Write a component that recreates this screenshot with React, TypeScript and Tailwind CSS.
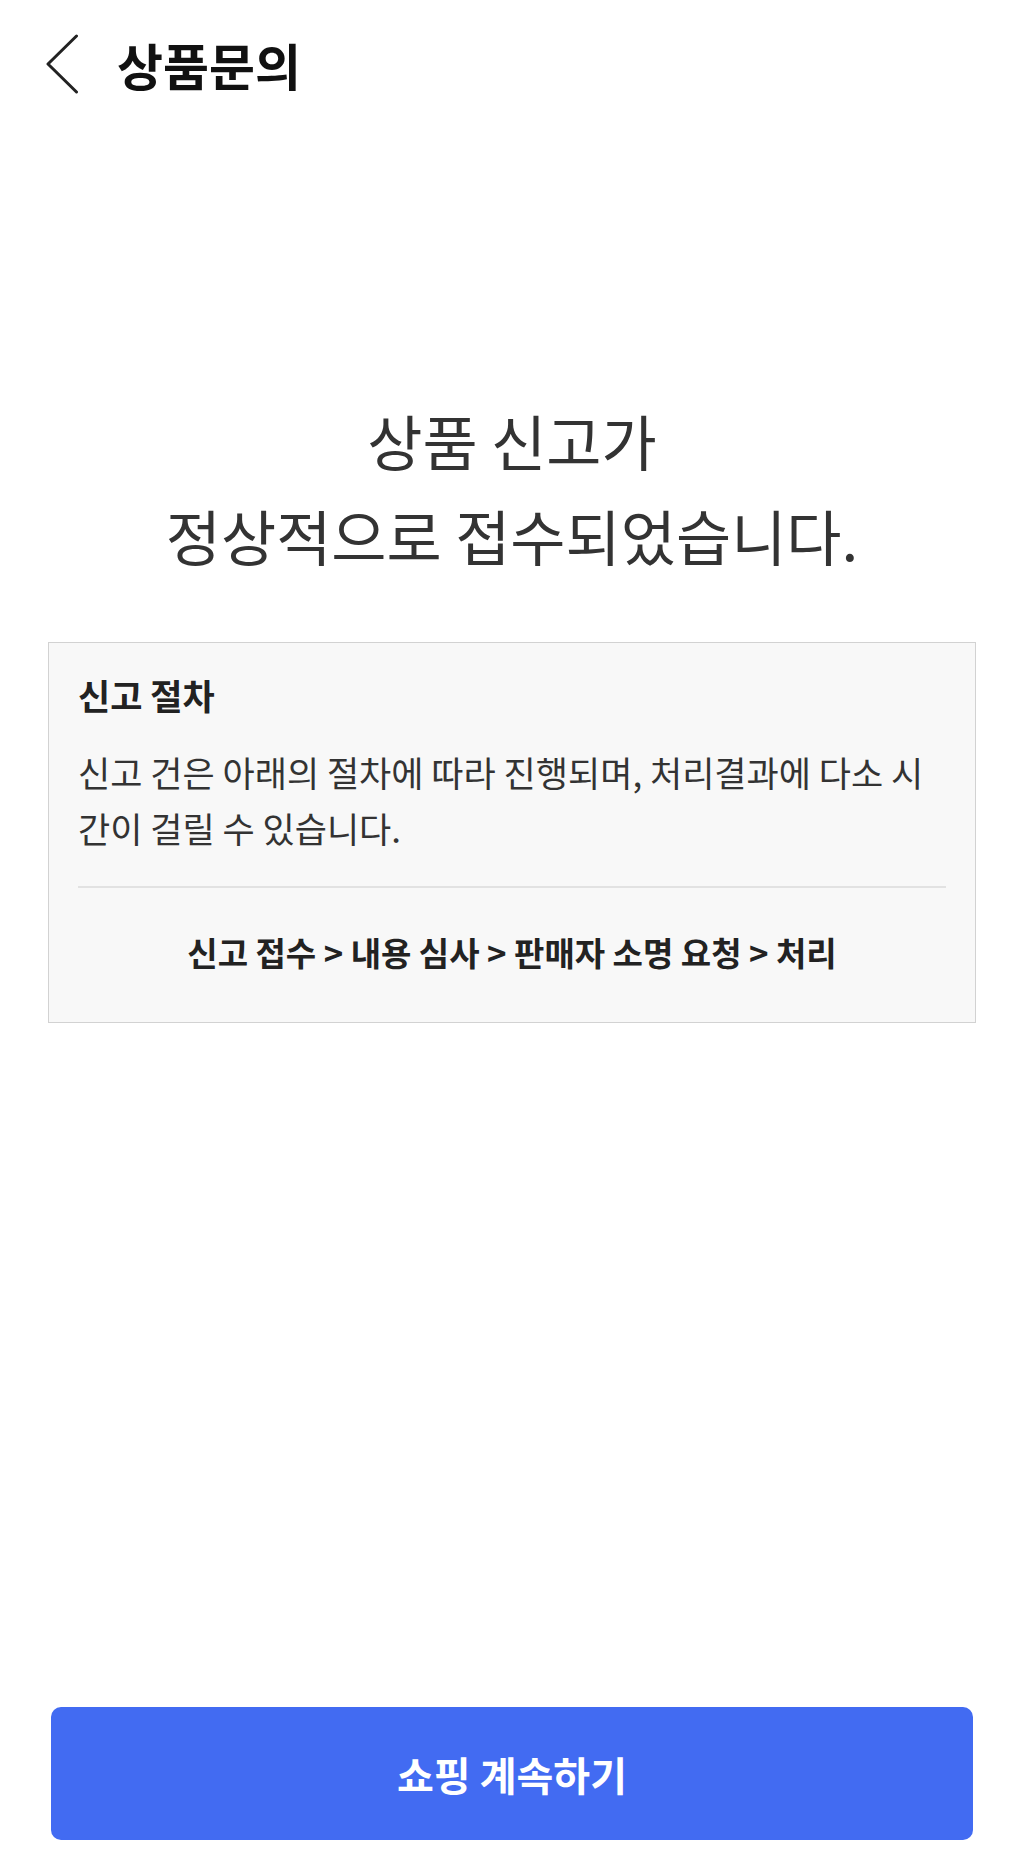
import React from 'react';

const steps = ['신고 접수', '내용 심사', '판매자 소명 요청', '처리'];

function BackIcon() {
  return (
    <svg width="34" height="60" viewBox="0 0 34 60" fill="none" aria-hidden="true">
      <path d="M31.5 2 L3 30 L31.5 58" stroke="#222222" strokeWidth="3" strokeLinecap="round" strokeLinejoin="round" />
    </svg>
  );
}

export default function App() {
  return (
    <div className="flex min-h-[1852px] flex-col bg-white font-['Noto_Sans_CJK_KR','Noto_Sans',sans-serif]">
      <header className="flex h-[128px] items-center pl-[45px]">
        <BackIcon />
        <h1 className="ml-[38px] text-[50px] font-bold leading-none text-[#111]">상품문의</h1>
      </header>

      <main className="flex flex-1 flex-col">
        <h2 className="mt-[264px] text-center text-[60px] font-normal leading-[95px] text-[#333]">
          상품 신고가
          <br />
          정상적으로 접수되었습니다.
        </h2>

        <section className="mx-[48px] mt-[60px] border border-[#d2d2d2] bg-[#f8f8f8] px-[29px] pt-[28px] pb-[46px]">
          <h3 className="text-[35px] font-bold leading-[48px] text-[#222]">신고 절차</h3>
          <p className="mt-[25px] text-[35px] leading-[56px] text-[#333]">
            신고 건은 아래의 절차에 따라 진행되며, 처리결과에 다소 시간이 걸릴 수 있습니다.
          </p>
          <div className="mt-[30px] h-[2px] bg-[#e2e2e2]" />
          <p className="mt-[40px] text-center text-[33px] font-bold leading-[48px] text-[#222]">
            {steps.join(' > ')}
          </p>
        </section>

        <div className="flex-1" />

        <div className="px-[51px] pb-[12px]">
          <button className="flex h-[133px] w-full items-center justify-center rounded-[10px] bg-[#426bf2] text-[40px] font-bold text-white">
            쇼핑 계속하기
          </button>
        </div>
      </main>
    </div>
  );
}
